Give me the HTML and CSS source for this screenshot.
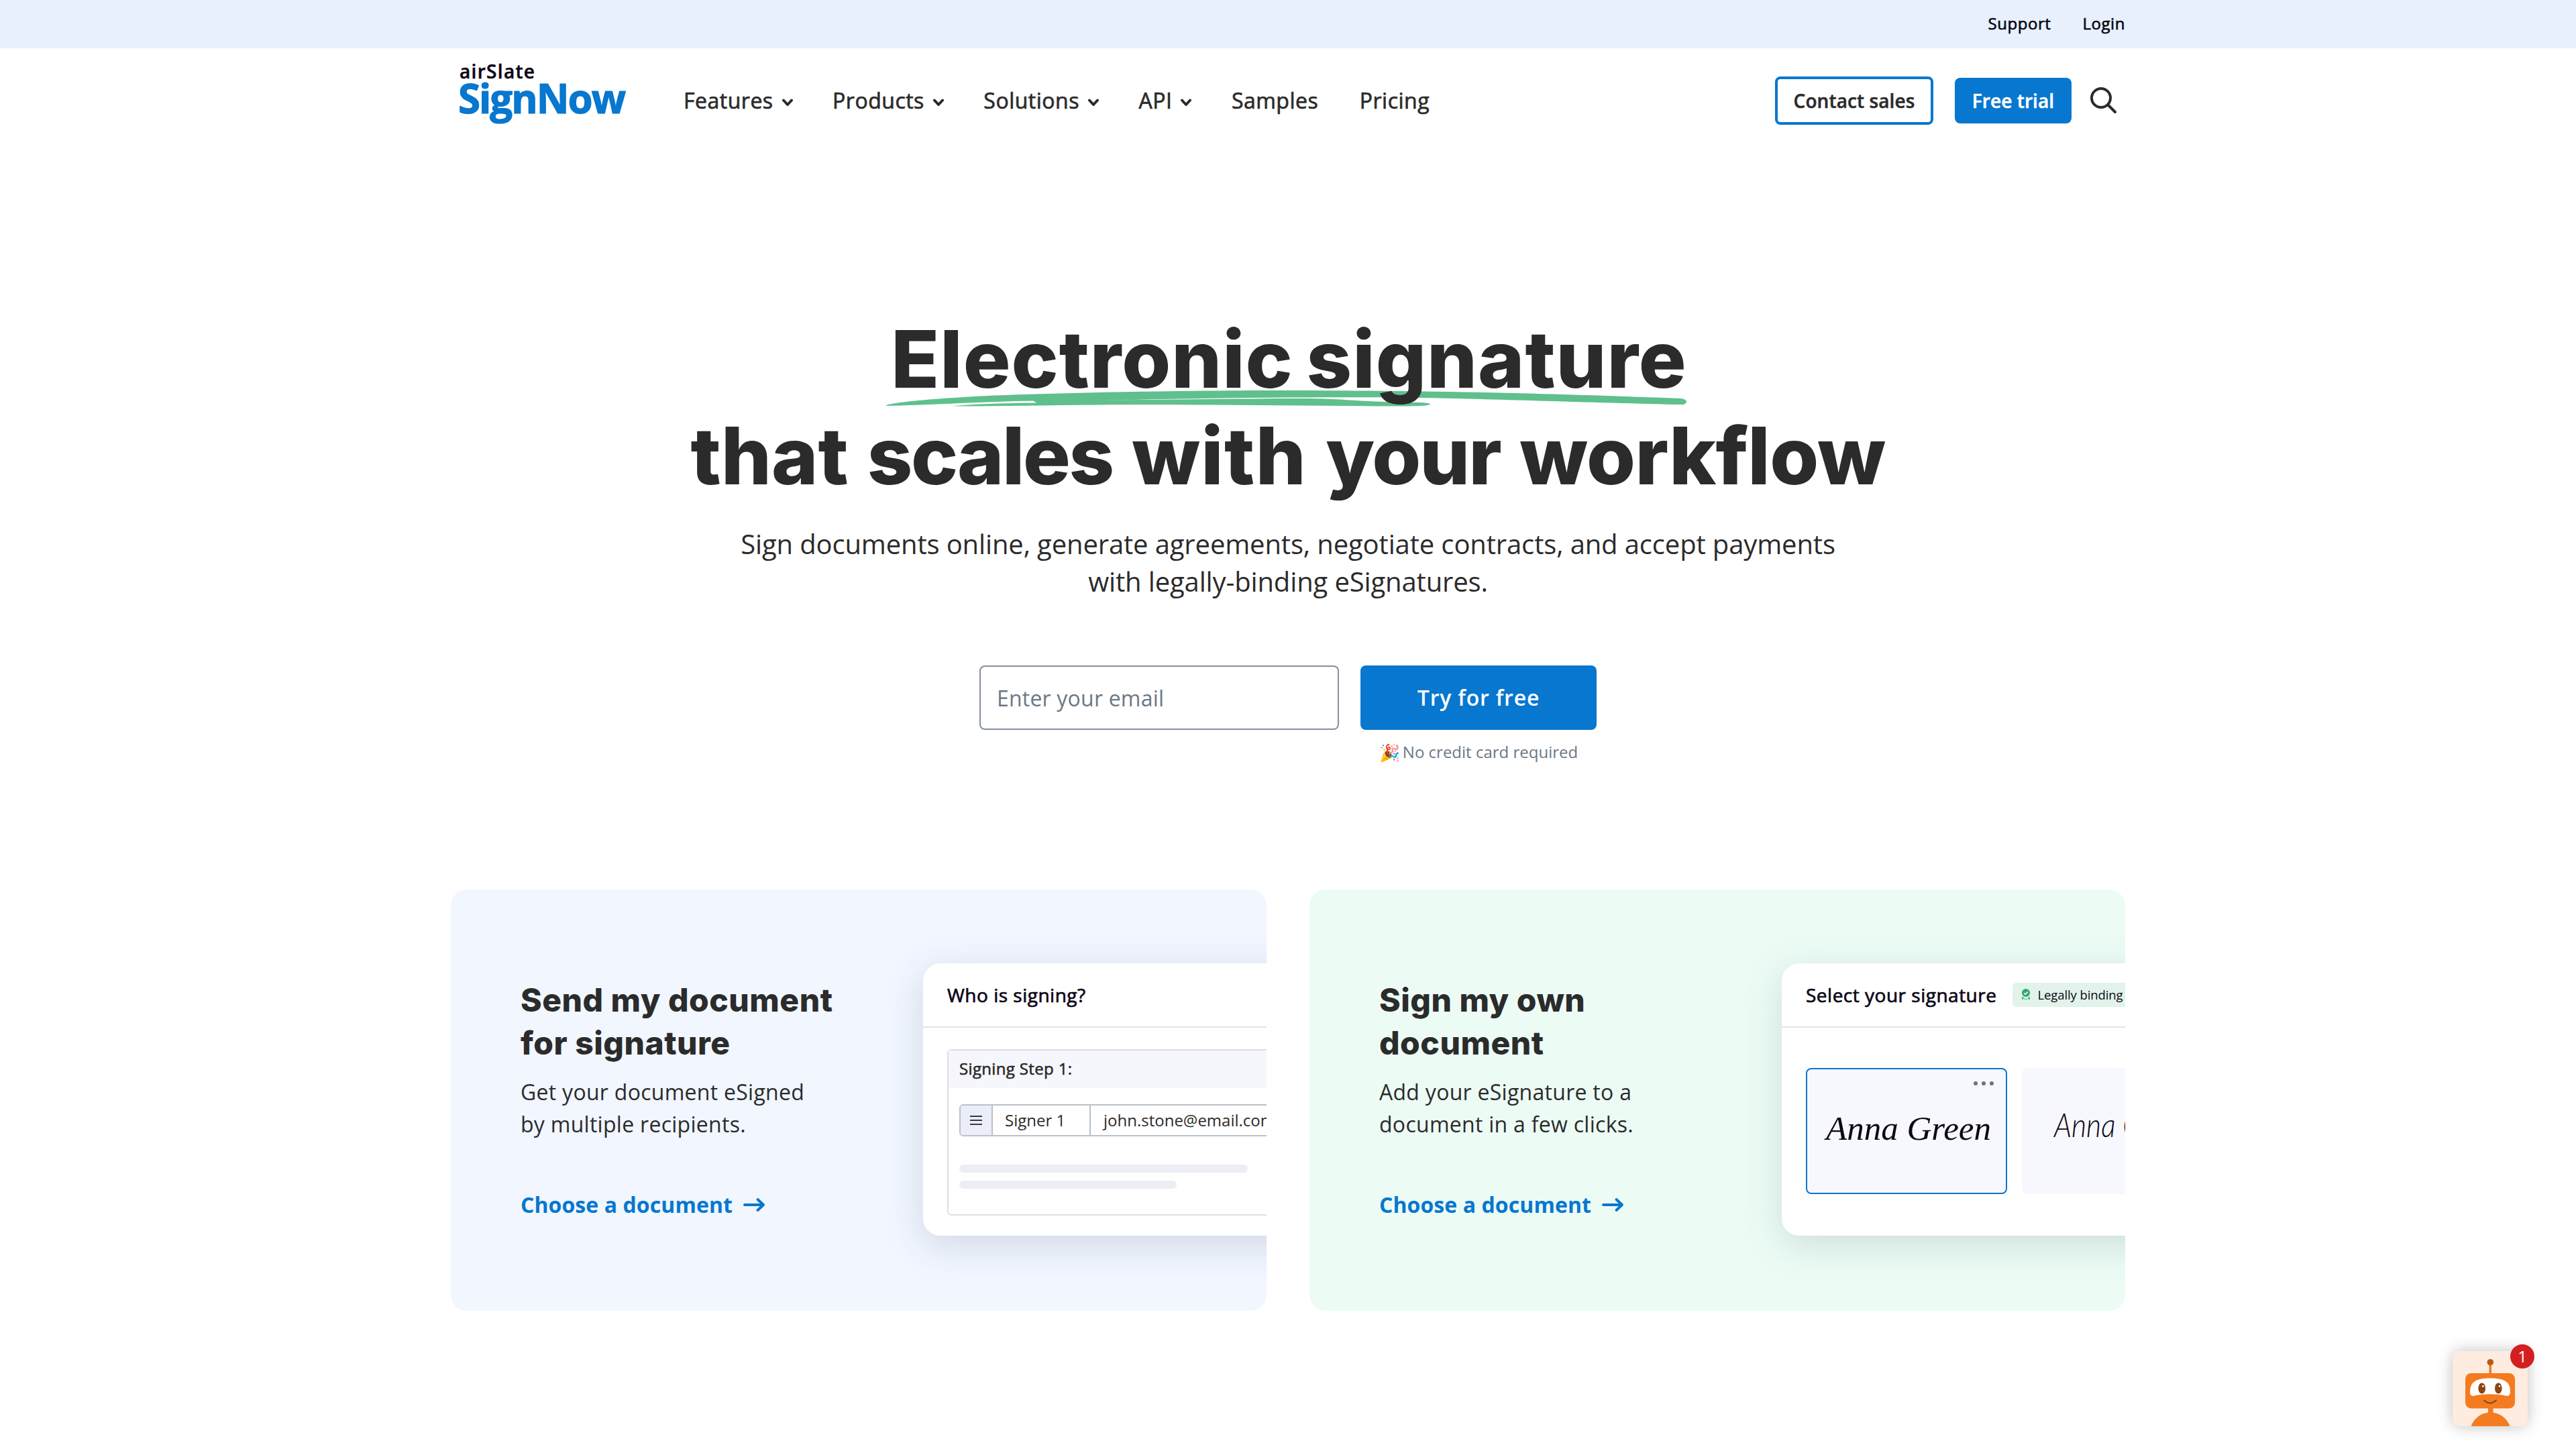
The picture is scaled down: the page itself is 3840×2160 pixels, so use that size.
FILE: index.html
```html
<!DOCTYPE html>
<html lang="en">
<head>
<meta charset="utf-8">
<title>airSlate SignNow</title>
<link rel="stylesheet" href="styles.css">
</head>
<body>
<div class="topbar"><div class="wrap topbar-inner"><a>Support</a><a>Login</a></div></div>
<header class="wrap header">
  <svg class="logo" width="262" height="110" viewBox="0 0 262 110">
    <text class="logo-small" x="13" y="39" textLength="112">airSlate</text>
    <text class="logo-big" x="11" y="91" textLength="250">SignNow</text>
  </svg>
  <nav class="nav">
    <a>Features<svg class="chev" viewBox="0 0 16 12"><path d="M2 2.500 8 9l6-6.500"/></svg></a>
    <a>Products<svg class="chev" viewBox="0 0 16 12"><path d="M2 2.500 8 9l6-6.500"/></svg></a>
    <a>Solutions<svg class="chev" viewBox="0 0 16 12"><path d="M2 2.500 8 9l6-6.500"/></svg></a>
    <a>API<svg class="chev" viewBox="0 0 16 12"><path d="M2 2.500 8 9l6-6.500"/></svg></a>
    <a class="nav-plain">Samples</a>
    <a>Pricing</a>
  </nav>
  <a class="btn btn-outline">Contact sales</a>
  <a class="btn btn-solid">Free trial</a>
  <svg class="search" width="42" height="42" viewBox="0 0 42 42"><circle cx="17" cy="17" r="14"/><path d="M27.500 27.500 38 38"/></svg>
</header>
<main>
  <section class="hero">
    <h1>
      <span class="line line-a">
        <svg class="swoosh" width="1200" height="30" viewBox="1316 578 1200 30">
          <path d="M1320 605C1319 600 1420 590 1560 587C1800 580 2000 582 2120 583.500C2250 585 2400 590 2505 594Q2513 595 2513 599Q2512 604 2503 603C2400 601 2200 594 2110 593C1980 591 1800 593 1640 597L1539 597.500C1460 599 1380 604 1320 605Z"/>
          <path d="M1418 605.500C1450 602 1500 601 1544 600.500L1538 596.500L1640 596.500C1760 596 1850 594 1940 594C1990 594 2010 597 2050 598.500C2090 600 2131 599 2131 602.500C2131 606 2090 605.500 2060 605.500C1900 604 1750 603 1640 603.500C1560 604 1480 606 1418 605.500Z"/>
        </svg>
        <span class="line-text">Electronic signature</span>
      </span>
      <span class="line line-b">that <span class="w-scales">scales</span> <span class="w-with">with</span> <span class="w-your">your</span> <span class="w-flow">workflow</span></span>
    </h1>
    <p class="lead">Sign documents online, generate agreements, negotiate contracts, and accept payments<br>with legally-binding eSignatures.</p>
    <form class="form">
      <input class="email" type="text" placeholder="Enter your email">
      <div class="cta">
        <button class="try" type="button">Try for free</button>
        <div class="note"><span class="party">🎉</span>No credit card required</div>
      </div>
    </form>
  </section>
  <section class="wrap cards">
    <article class="card card-blue">
      <div class="card-copy">
        <h3>Send my document<br>for signature</h3>
        <p>Get your document eSigned<br>by multiple recipients.</p>
        <a class="choose">Choose a document<svg width="36" height="24" viewBox="0 0 36 24"><path d="M4 12h28M23.500 4l8.500 8-8.500 8"/></svg></a>
      </div>
      <div class="mock">
        <div class="mock-head">Who is signing?</div>
        <div class="step">
          <div class="step-title">Signing Step 1:</div>
          <div class="signer">
            <span class="grip"><i></i><i></i><i></i></span>
            <span class="role">Signer 1</span>
            <span class="mail">john.stone@email.com</span>
          </div>
          <div class="bar bar-long"></div>
          <div class="bar bar-short"></div>
        </div>
      </div>
    </article>
    <article class="card card-green">
      <div class="card-copy">
        <h3>Sign my own<br>document</h3>
        <p>Add your eSignature to a<br>document in a few clicks.</p>
        <a class="choose">Choose a document<svg width="36" height="24" viewBox="0 0 36 24"><path d="M4 12h28M23.500 4l8.500 8-8.500 8"/></svg></a>
      </div>
      <div class="mock">
        <div class="mock-head">Select your signature
          <span class="badge"><svg width="14" height="17" viewBox="0 0 14 17"><circle cx="7" cy="6" r="6" fill="#34a86b"/><path d="M4.200 6.200l2 2 3.600-3.800" fill="none" stroke="#fff" stroke-width="1.500"/><path d="M1.500 12.500l2 1-1.500 2.500zM12.500 12.500l-2 1 1.500 2.500zM5 14l1 2.500M9 14l-1 2.500" fill="#34a86b" stroke="#34a86b"/></svg>Legally binding</span>
        </div>
        <div class="signs">
          <div class="sign sign-on">
            <span class="dots"><i></i><i></i><i></i></span>
            <svg width="296" height="184" viewBox="0 0 296 184"><text class="sig-a" x="28" y="105" textLength="246" lengthAdjust="spacingAndGlyphs">Anna Green</text></svg>
          </div>
          <div class="sign">
            <svg width="300" height="188" viewBox="0 0 300 188"><text class="sig-b" x="48" y="103" textLength="206" lengthAdjust="spacingAndGlyphs">Anna Green</text></svg>
          </div>
        </div>
      </div>
    </article>
  </section>
</main>
<div class="chat">
  <svg width="112" height="112" viewBox="0 0 112 112">
    <path d="M54.500 18h3.500v18h-3.500z" fill="#f47b20"/>
    <circle cx="56.300" cy="16.700" r="4.800" fill="#b85c14"/>
    <rect x="19" y="33" width="74" height="52.500" rx="8.500" fill="#f47b20"/>
    <path d="M53 84h7.500v10H53z" fill="#f47b20"/>
    <path d="M27.500 112C32 100 43 91.500 56.500 91.500S81 100 85.500 112z" fill="#f47b20"/>
    <path d="M26 62C26 47 33 40.500 56 40.500S86 47 86 60C86 66 83 68 79 66.500C66 63.500 46 63.500 33 66.500C29 68 26 66 26 62z" fill="#fff"/>
    <ellipse cx="43.700" cy="55.500" rx="5.300" ry="8" fill="#8a4512"/><ellipse cx="68.300" cy="55.500" rx="5.300" ry="8" fill="#8a4512"/>
    <circle cx="45.300" cy="52.300" r="1.400" fill="#fff"/><circle cx="70" cy="52.300" r="1.400" fill="#fff"/>
    <path d="M47 73.500Q56 81.500 65 73.500" fill="none" stroke="#8a4512" stroke-width="1.800" stroke-linecap="round"/>
  </svg>
  <span class="count">1</span>
</div>
</body>
</html>
```
FILE: styles.css
```css
* { box-sizing: border-box; }
html, body { margin: 0; height: 2160px; overflow: hidden; }
body {
  position: relative;
  background: #fff;
  color: #2b2b2b;
  font: 400 32px/48px "Open Sans", "Noto Sans", sans-serif;
}
h1, h3, p { margin: 0; }
.wrap { width: 2496px; margin: 0 auto; }

.topbar { height: 72px; background: #e8f0fe; }
.topbar-inner {
  height: 70px;
  display: flex;
  justify-content: flex-end;
  align-items: center;
  gap: 47px;
  font-size: 24px;
  font-weight: 500;
  letter-spacing: .55px;
  color: #050510;
  -webkit-text-stroke: .6px;
}

.header { height: 156px; display: flex; align-items: center; }
.logo { align-self: flex-start; margin-top: 6px; overflow: visible; }
.logo-small { font-size: 28px; font-weight: 600; fill: #0d0616; stroke: #0d0616; stroke-width: .5px; }
.logo-big { font-size: 60px; font-weight: 700; fill: #0777cf; stroke: #0777cf; stroke-width: 1.2px; stroke-linejoin: round; }
.nav {
  display: flex;
  gap: 59.5px;
  margin-left: 85px;
  font-weight: 500;
  letter-spacing: .5px;
  -webkit-text-stroke: .7px;
}
.nav a { display: flex; align-items: center; }
.nav-plain { margin-right: 2px; }
.chev { width: 16px; height: 12px; margin: 6px 0 0 13px; }
.chev path { fill: none; stroke: #2b2b2b; stroke-width: 4; stroke-linecap: round; stroke-linejoin: round; }
.btn {
  display: flex;
  align-items: center;
  justify-content: center;
  border-radius: 8px;
  font-size: 28px;
  font-weight: 600;
  letter-spacing: .1px;
  -webkit-text-stroke: .5px;
}
.btn-outline { width: 236px; height: 72px; border: 4px solid #0777cf; margin-left: auto; }
.btn-solid { width: 174px; height: 68px; background: #0777cf; color: #fff; margin-left: 32px; }
.search { margin: 0 11px 0 27px; }
.search * { fill: none; stroke: #2b2b2b; stroke-width: 4; stroke-linecap: round; }

.hero { padding-top: 235px; display: flex; flex-direction: column; align-items: center; }
h1 { font: 800 118px/144px Inter, sans-serif; text-align: center; }
.line { display: block; width: max-content; margin: 0 auto; position: relative; white-space: nowrap; }
.line-a { padding-left: 3px; letter-spacing: 1px; word-spacing: -7px; }
.line-b { word-spacing: 2.5px; }
.w-scales { letter-spacing: -2.4px; }
.w-with { letter-spacing: 1.3px; }
.w-your { letter-spacing: -2px; }
.w-flow { letter-spacing: -.6px; }
.line-text { position: relative; }
.swoosh { position: absolute; left: -8px; top: 115px; fill: #5fc08d; }
.lead { margin-top: 32px; font-size: 40px; line-height: 56px; letter-spacing: -.14px; text-align: center; }
.form { display: flex; gap: 32px; margin-top: 97px; }
.email {
  width: 536px;
  height: 96px;
  border: 2px solid #848f9f;
  border-radius: 8px;
  padding: 0 24px;
  background: #fff;
  font: inherit;
  letter-spacing: .2px;
}
.email::placeholder { color: #6b7886; opacity: 1; }
.cta { width: 352px; }
.try {
  display: block;
  width: 100%;
  height: 96px;
  border: 0;
  border-radius: 8px;
  background: #0777cf;
  color: #fff;
  font: 600 32px/48px "Open Sans", sans-serif;
  letter-spacing: .8px;
}
.note {
  display: flex;
  justify-content: center;
  align-items: center;
  height: 32px;
  margin-top: 17px;
  font-size: 24px;
  color: #6b7886;
}
.party { font-size: 25px; margin-right: 4px; }

.cards { display: flex; gap: 64px; margin-top: 189px; }
.card { width: 1216px; height: 628px; border-radius: 24px; overflow: hidden; display: flex; }
.card-blue { background: #f1f6ff; }
.card-green { background: #ecfcf5; }
.card-copy { flex: none; width: 704px; padding: 133px 0 0 104px; }
.card-copy h3 { font: 800 48px/64px Inter, sans-serif; letter-spacing: .5px; }
.card-copy p { margin-top: 17px; letter-spacing: .28px; }
.choose {
  display: flex;
  align-items: center;
  gap: 14px;
  margin-top: 72px;
  font-weight: 700;
  letter-spacing: .08px;
  color: #0777cf;
}
.choose path { fill: none; stroke: #0777cf; stroke-width: 4; stroke-linecap: round; stroke-linejoin: round; }

.mock {
  flex: none;
  width: 700px;
  height: 406px;
  margin-top: 110px;
  border-radius: 26px;
  background: #fff;
  box-shadow: 0 14px 56px rgba(60, 70, 95, .17);
}
.mock-head {
  height: 96px;
  padding: 0 36px 1px;
  display: flex;
  align-items: center;
  border-bottom: 2px solid #e3e4e7;
  font-size: 28px;
  font-weight: 500;
  letter-spacing: .5px;
  color: #0d0616;
  -webkit-text-stroke: .7px;
}
.step { height: 248px; margin: 32px 0 0 36px; border: 2px solid #dcdee2; border-radius: 6px; }
.step-title {
  height: 56px;
  padding: 1px 0 0 16px;
  background: #f6f7fc;
  font-size: 24px;
  font-weight: 500;
  letter-spacing: .35px;
  line-height: 52px;
  -webkit-text-stroke: .6px;
}
.signer {
  display: flex;
  height: 48px;
  margin: 24px 0 0 16px;
  border: 2px solid #b9c1ca;
  border-radius: 6px 0 0 6px;
  font-size: 24px;
  line-height: 43px;
}
.grip {
  width: 48px;
  background: #ebeef6;
  border-right: 2px solid #b9c1ca;
  border-radius: 4px 0 0 4px;
  display: flex;
  flex-direction: column;
  align-items: center;
  justify-content: center;
  gap: 4px;
}
.grip i { width: 18px; height: 2px; background: #43334d; }
.role { width: 146px; padding-left: 18px; border-right: 2px solid #b9c1ca; }
.mail { padding-left: 19px; }
.bar { height: 12px; margin-left: 16px; border-radius: 6px; background: #ebeef4; }
.bar-long { width: 430px; margin-top: 42px; }
.bar-short { width: 324px; margin-top: 12px; }

.badge {
  display: flex;
  align-items: center;
  gap: 10px;
  width: 300px;
  height: 36px;
  margin-left: 24px;
  padding-left: 13px;
  border-radius: 6px;
  background: #e1f3ea;
  font-size: 18.5px;
  font-weight: 400;
  letter-spacing: -.1px;
  white-space: nowrap;
  -webkit-text-stroke: 0;
}
.signs { display: flex; gap: 22px; padding: 60px 0 0 36px; }
.sign { flex: none; position: relative; width: 300px; height: 188px; border-radius: 8px; background: #f6f8fd; }
.sign-on { border: 2px solid #0777cf; }
.sign svg { display: block; }
.dots { position: absolute; right: 18px; top: 18px; display: flex; gap: 6px; }
.dots i { width: 6px; height: 6px; border-radius: 50%; background: #66727f; }
.sig-a { font: italic 400 50px "Liberation Serif", serif; fill: #0d0616; }
.sig-b { font: italic 300 50px Lato, sans-serif; fill: #0d0616; }

.chat {
  position: absolute;
  left: 3656px;
  top: 2014px;
  width: 112px;
  height: 112px;
  border-radius: 10px;
  background: #fdecdf;
  box-shadow: 0 0 22px rgba(0, 0, 0, .25);
}
.chat svg { display: block; }
.count {
  position: absolute;
  left: 86px;
  top: -10px;
  width: 36px;
  height: 36px;
  border-radius: 50%;
  background: #d31f1f;
  color: #fff;
  font-size: 24px;
  line-height: 35px;
  text-align: center;
}
```
